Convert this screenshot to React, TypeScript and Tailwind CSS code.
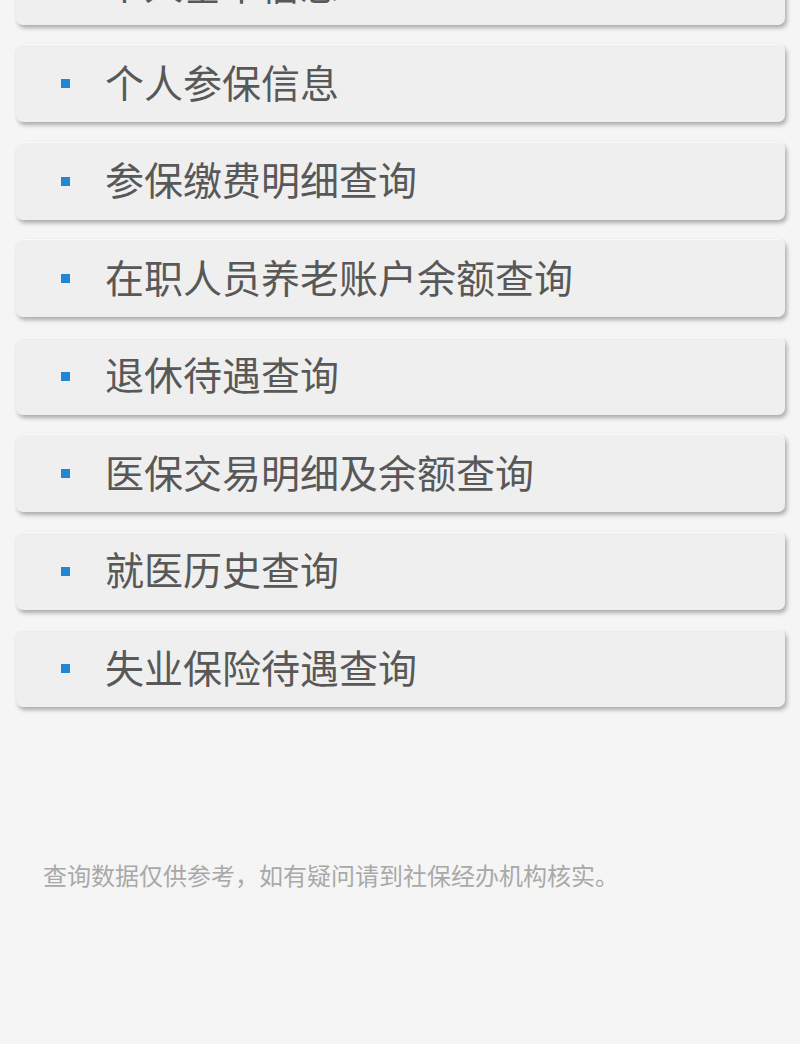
const items = [
  '个人基本信息',
  '个人参保信息',
  '参保缴费明细查询',
  '在职人员养老账户余额查询',
  '退休待遇查询',
  '医保交易明细及余额查询',
  '就医历史查询',
  '失业保险待遇查询',
];

function MenuCard({ label }: { label: string }) {
  return (
    <div className="flex h-[78px] items-center rounded-[7px] border-t border-t-[#fafafa] bg-[#efefef] pl-[45px] shadow-[2px_3px_4px_rgba(0,0,0,0.3)]">
      <span className="h-[9px] w-[9px] shrink-0 bg-[#1f87d6]" />
      <span className="ml-[35px] mt-[-5px] text-[39px] leading-none text-[#585858]">{label}</span>
    </div>
  );
}

export default function App() {
  return (
    <div
      className="h-[1044px] w-[800px] overflow-hidden bg-[#f5f5f5]"
      style={{ fontFamily: '"Noto Sans CJK SC", "Noto Sans", sans-serif' }}
    >
      <div className="mt-[-53.5px] flex flex-col gap-[19.5px] pl-[16px] pr-[15px]">
        {items.map((label) => (
          <MenuCard key={label} label={label} />
        ))}
      </div>
      <p className="mt-[156px] pl-[43px] text-[24px] leading-none text-[#a9a9a9]">
        查询数据仅供参考，如有疑问请到社保经办机构核实。
      </p>
    </div>
  );
}
